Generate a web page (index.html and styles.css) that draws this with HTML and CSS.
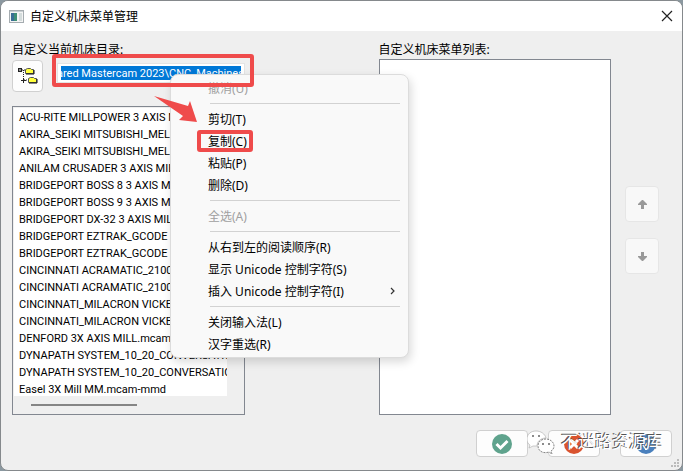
FILE: index.html
```html
<!DOCTYPE html>
<html lang="zh-CN">
<head>
  <meta charset="UTF-8" />
  <meta name="viewport" content="width=device-width, initial-scale=1.0" />
  <title>自定义机床菜单管理</title>
  <link rel="stylesheet" href="styles.css">
</head>
<body>
  <div class="window">
    <header class="titlebar">
      <svg class="app-icon" width="15" height="13" viewBox="0 0 15 13">
        <rect x="0.5" y="0.5" width="14" height="12" fill="#f4f4f4" stroke="#a5acb0" />
        <rect x="1" y="1" width="13" height="1" fill="#c9cfd2" />
        <rect x="2" y="3" width="6" height="8" fill="#3f8f76" />
        <rect x="2" y="3" width="3" height="8" fill="#3a6e95" />
        <rect x="10" y="3" width="3" height="8" fill="#d4dcdc" />
      </svg>
      <h1>自定义机床菜单管理</h1>
      <button class="close" aria-label="关闭">
        <svg width="12" height="12" viewBox="0 0 12 12"><path d="M1 1L11 11M11 1L1 11" stroke="#222" stroke-width="1.2" /></svg>
      </button>
    </header>

    <main class="content">
      <section class="column">
        <label class="caption" for="path">自定义当前机床目录:</label>
        <div class="path-row">
          <button class="browse" aria-label="浏览目录">
            <svg width="20" height="18" viewBox="0 0 20 18">
              <path d="M4 3h4M5.500 3v10M6 13h5" fill="none" stroke="#222" stroke-dasharray="1 1" />
              <rect x="0.5" y="1.5" width="3" height="3" fill="#fff" stroke="#222" />
              <path d="M1 3h2M5.500 11v5M3 13.500h5" stroke="#222" />
              <path d="M7.500 6.500v-4l2-1h3l1 1h2v4z" fill="#ffff3c" stroke="#555" />
              <path d="M8 7h8V3" fill="none" stroke="#111" />
              <path d="M10.500 15.500v-4l2-1h3l1 1h2v4z" fill="#ffff3c" stroke="#555" />
              <path d="M11 16h8v-4" fill="none" stroke="#111" />
            </svg>
          </button>
          <div class="path-box">
            <input class="path" id="path" type="text" value="ared Mastercam 2023\CNC_Machines\">
            <span class="mark mark-path"></span>
          </div>
        </div>
        <div class="list machines">
          <ul>
            <li>ACU-RITE MILLPOWER 3 AXIS MILL</li>
            <li>AKIRA_SEIKI MITSUBISHI_MELDAS</li>
            <li>AKIRA_SEIKI MITSUBISHI_MELDAS</li>
            <li>ANILAM CRUSADER 3 AXIS MILL</li>
            <li>BRIDGEPORT BOSS 8 3 AXIS MILL</li>
            <li>BRIDGEPORT BOSS 9 3 AXIS MILL</li>
            <li>BRIDGEPORT DX-32 3 AXIS MILL</li>
            <li>BRIDGEPORT EZTRAK_GCODE 3X</li>
            <li>BRIDGEPORT EZTRAK_GCODE 3X</li>
            <li>CINCINNATI ACRAMATIC_2100</li>
            <li>CINCINNATI ACRAMATIC_2100</li>
            <li>CINCINNATI_MILACRON VICKERS</li>
            <li>CINCINNATI_MILACRON VICKERS</li>
            <li>DENFORD 3X AXIS MILL.mcam-mmd</li>
            <li>DYNAPATH SYSTEM_10_20_CONVERSATIO</li>
            <li>DYNAPATH SYSTEM_10_20_CONVERSATIO</li>
            <li>Easel 3X Mill MM.mcam-mmd</li>
          </ul>
          <div class="scrollbar"><span class="thumb"></span></div>
        </div>
      </section>

      <section class="column">
        <h2 class="caption">自定义机床菜单列表:</h2>
        <div class="list"></div>
      </section>

      <div class="order">
        <button aria-label="上移" disabled>
          <svg width="9" height="9" viewBox="0 0 9 9"><path d="M4 0h1l4 4v1H6v4H3V5H0V4z" fill="#999" /></svg>
        </button>
        <button aria-label="下移" disabled>
          <svg width="9" height="9" viewBox="0 0 9 9"><path d="M4 9h1l4-4V4H6V0H3v4H0v1z" fill="#999" /></svg>
        </button>
      </div>
    </main>

    <footer class="actions">
      <button aria-label="确定">
        <svg width="20" height="20" viewBox="0 0 20 20">
          <circle cx="10" cy="10" r="10" fill="#5fa38d" />
          <path d="M4.500 10l4 4 7-7" fill="none" stroke="#fff" stroke-width="3" />
        </svg>
      </button>
      <button aria-label="取消">
        <svg width="20" height="20" viewBox="0 0 20 20">
          <circle cx="10" cy="10" r="10" fill="#d9532f" />
          <path d="M6 6l8 8M14 6l-8 8" stroke="#fff" stroke-width="3" />
        </svg>
      </button>
      <button aria-label="帮助">
        <svg width="20" height="20" viewBox="0 0 20 20">
          <circle cx="10" cy="10" r="10" fill="#4a80bd" />
          <path d="M7 8c0-4 6-4 6-1 0 2-3 2-3 5M10 14v2" fill="none" stroke="#fff" stroke-width="2" />
        </svg>
      </button>
      <div class="watermark">
        <svg width="28" height="24" viewBox="0 0 28 24">
          <path d="M9 1C4 1 0 4 0 9c0 3 1 5 3 6l-1 3 4-2h4c0-5 4-8 9-8C18 4 14 1 9 1z" fill="#fff" stroke="#aaa" stroke-width="0.600" />
          <path d="M19 9c-5 0-8 3-8 7 0 5 5 8 11 6l3 2-1-3c2-1 3-3 3-5 0-4-4-7-8-7z" fill="#fff" stroke="#666" stroke-width="0.800" stroke-dasharray="2 1" />
          <g fill="#666"><circle cx="6" cy="6" r="1" /><circle cx="12" cy="6" r="1" /><circle cx="16" cy="14" r="1" /><circle cx="22" cy="14" r="1" /></g>
        </svg>
        <span>不迷路资源库</span>
      </div>
    </footer>

    <svg class="grip" width="10" height="10" viewBox="0 0 10 10">
      <path d="M7 0h2v2H7zM4 3h2v2H4zM7 3h2v2H7zM1 6h2v2H1zM4 6h2v2H4zM7 6h2v2H7z" fill="#bbb" />
    </svg>

    <div class="menu" role="menu">
      <button role="menuitem" disabled>撤消(U)</button>
      <hr>
      <button role="menuitem">剪切(T)</button>
      <button role="menuitem">复制(C)<span class="mark mark-copy"></span></button>
      <button role="menuitem">粘贴(P)</button>
      <button role="menuitem">删除(D)</button>
      <hr>
      <button role="menuitem" disabled>全选(A)</button>
      <hr>
      <button role="menuitem">从右到左的阅读顺序(R)</button>
      <button role="menuitem">显示 Unicode 控制字符(S)</button>
      <button role="menuitem">插入 Unicode 控制字符(I)
        <svg width="5" height="8" viewBox="0 0 5 8"><path d="M1 1l3 3-3 3" fill="none" stroke="#333" stroke-width="1.200" /></svg>
      </button>
      <hr>
      <button role="menuitem">关闭输入法(L)</button>
      <button role="menuitem">汉字重选(R)</button>
    </div>

    <svg class="pointer" width="46" height="28" viewBox="0 0 46 28">
      <path d="M0 0L34 10L36 5L43 26L25 24L29 20z" fill="#ef4b4b" />
    </svg>
  </div>
</body>
</html>
```
FILE: styles.css
```css
* {
  box-sizing: border-box;
}
body {
  margin: 0;
  background: #8b98a0;
  font-family: "Noto Sans", "Noto Sans CJK SC", sans-serif;
  font-size: 12px;
  color: #000;
}
button,
input {
  font: inherit;
  color: inherit;
}
button {
  display: flex;
  align-items: center;
  justify-content: center;
  padding: 0;
  background: #fdfdfd;
  border: 1px solid #d0d0d0;
  border-radius: 4px;
}
.window {
  position: relative;
  display: flex;
  flex-direction: column;
  height: 100vh;
  background: #efefef;
  border: 1px solid #85898c;
  border-radius: 8px;
  overflow: hidden;
}
.titlebar {
  display: flex;
  align-items: center;
  height: 30px;
  padding: 0 9px 0 8px;
  background: #fff;
}
.titlebar h1 {
  flex: 1;
  margin: 0 0 0 6px;
  font-size: 12px;
  font-weight: normal;
}
.close {
  background: none;
  border: none;
}
.content {
  display: flex;
  flex: 1;
  min-height: 0;
  padding: 9px 23px 0 11px;
}
.column {
  display: flex;
  flex: 1;
  flex-direction: column;
  min-width: 0;
}
.column + .column {
  margin-left: 134px;
}
.caption {
  height: 19px;
  margin: 0;
  font-size: 12px;
  font-weight: normal;
  line-height: 19px;
}
.path-row {
  display: flex;
  gap: 14px;
  height: 47px;
}
.browse {
  width: 31px;
  height: 32px;
  margin-top: 1px;
}
.path-box {
  position: relative;
  flex: 1;
  height: 20px;
  margin-top: 4px;
}
.path {
  display: block;
  width: 100%;
  height: 20px;
  padding: 2px 3px;
  border: 1px solid #e4e4e4;
  background: linear-gradient(#0078d7, #0078d7) content-box, #fff;
  color: #fff;
  font-family: Roboto, sans-serif;
  font-size: 11px;
  text-indent: -4px;
}
.mark {
  position: absolute;
  border: 4px solid #ef4b4b;
  border-radius: 3px;
}
.mark-path {
  z-index: 3;
  top: -9px;
  right: -9px;
  bottom: -4px;
  left: -5px;
}
.mark-copy {
  top: 0;
  bottom: 0;
  left: 26px;
  width: 56px;
}
.list {
  flex: 1;
  min-height: 0;
  background: #fff;
  border: 1px solid #828790;
}
.machines {
  display: flex;
  flex-direction: column;
  padding: 1px;
  background: #efefef;
}
.machines ul {
  flex: 1;
  margin: 0 16px 0 0;
  padding: 1px 0 0 5px;
  background: #fff;
  list-style: none;
  overflow: hidden;
}
.machines li {
  height: 17px;
  font-family: Roboto, sans-serif;
  font-size: 11px;
  line-height: 17px;
  white-space: nowrap;
}
.scrollbar {
  display: flex;
  align-items: center;
  height: 17px;
  padding-left: 17px;
}
.thumb {
  width: 50%;
  height: 2px;
  background: #858585;
}
.order {
  display: flex;
  flex-direction: column;
  gap: 16px;
  margin: 146px 0 0 14px;
}
.order button {
  width: 34px;
  height: 36px;
  background: #f8f8f8;
  border-color: #e6e6e6;
}
.actions {
  position: relative;
  display: flex;
  justify-content: flex-end;
  gap: 20px;
  padding: 15px 10px 13px;
}
.actions button {
  width: 52px;
  height: 27px;
}
.watermark {
  position: absolute;
  right: 19px;
  bottom: 16px;
  display: flex;
  align-items: center;
  gap: 6px;
  color: #fff;
  font-size: 17px;
  line-height: 24px;
  text-shadow: -1px -1px 0 #555;
}
.grip {
  position: absolute;
  right: 2px;
  bottom: 1px;
}
.menu {
  position: absolute;
  z-index: 2;
  top: 73px;
  left: 169px;
  width: 239px;
  padding: 2px 0;
  background: #f9f9f9;
  border: 1px solid #dcdcdc;
  border-radius: 8px;
  box-shadow: 2px 4px 10px rgba(0, 0, 0, 0.15);
}
.menu button {
  position: relative;
  justify-content: space-between;
  width: 100%;
  height: 22px;
  padding: 0 13px 0 37px;
  background: none;
  border: none;
}
.menu button:disabled {
  color: #a0a0a0;
}
.menu hr {
  height: 1px;
  margin: 4px 8px 4px 39px;
  border: none;
  background: #d2d2d2;
}
.pointer {
  position: absolute;
  z-index: 3;
  top: 95px;
  left: 153px;
}
```
